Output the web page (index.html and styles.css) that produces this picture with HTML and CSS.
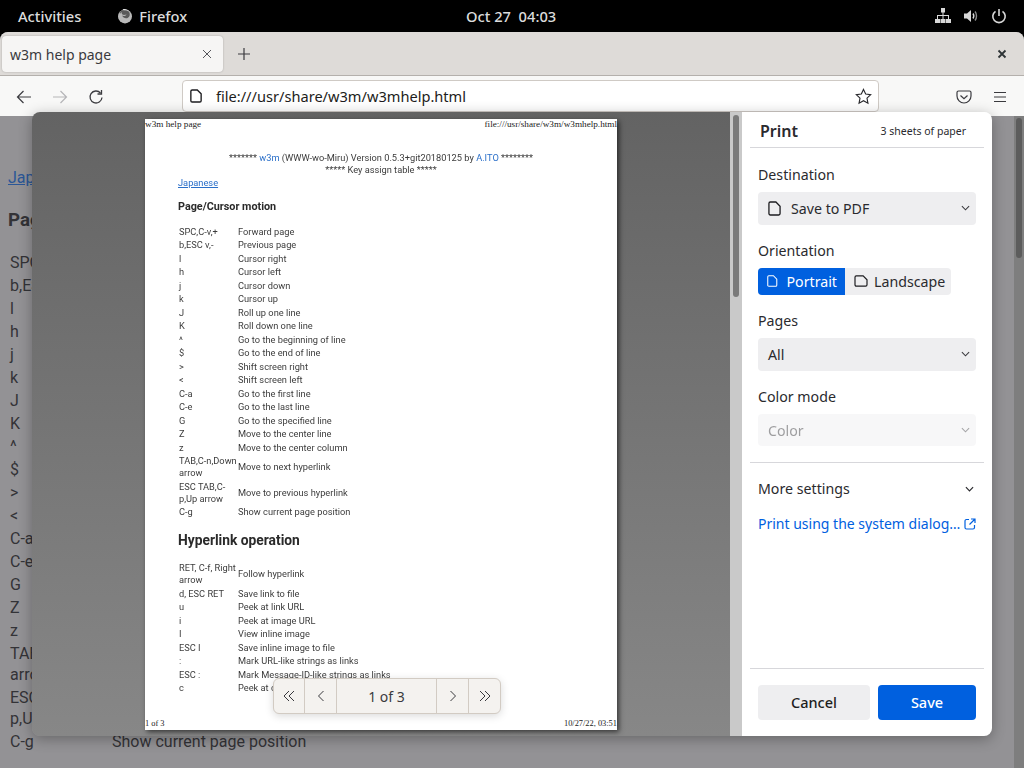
FILE: index.html
```html
<!DOCTYPE html>
<html lang="en">
<head>
    <meta charset="UTF-8">
    <title>w3m help page</title>
    <link rel="stylesheet" href="styles.css">
</head>
<body>

<header class="topbar">
    <div class="topbar-left">
        <span class="activities">Activities</span>
        <span class="app-name">
            <svg class="fx-icon" viewBox="0 0 16 16" width="16" height="16">
                <circle cx="8" cy="8.4" r="7" fill="#b9b9b9"/>
                <path d="M3.6 3.2C2.6 5 3 5.8 3 5.8c1-1.6 2.2-1.6 2.2-1.6-.8 1-.4 2 .4 2.4 1.6.8 2.4 0 4-.2-1 1.4-3 2-4.4 1.2.8 2.4 3.6 3.4 5.8 2.2 1.8-1 2.2-3.4 1.4-5.2C11.6 3 9.600 1.800 7.600 2 6 2.200 4.600 2.400 3.600 3.200z" fill="#5a5a5a"/>
                <path d="M5.500 1.200c2-.6 5.500-.2 7.500 2.800-1.500-1.600-3-1.800-4-1.800-1.200 0-2.500.2-3.500-1z" fill="#e8e8e8"/>
            </svg>
            Firefox
        </span>
    </div>
    <div class="clock">Oct 27&nbsp; 04:03</div>
    <div class="tray">
        <svg viewBox="0 0 16 16" width="16" height="16" fill="#d8d8d8"><path d="M6 0h4v4.500H8.500V7H14v4h-1V8H8.500v3h-1V8H3v3H2V7h5.500V4.500H6z"/><path d="M0 11h5v4H0zM5.500 11h5v4h-5zM11 11h5v4h-5z"/></svg>
        <svg viewBox="0 0 16 16" width="16" height="16" fill="none"><path d="M1 5.500h3L8 2v12l-4-3.500H1z" fill="#d8d8d8"/><path d="M10 5.500c1 1.500 1 3.500 0 5" stroke="#d8d8d8" stroke-width="1.400"/><path d="M12 3.500c2 2.500 2 6.500 0 9" stroke="#8a8a8a" stroke-width="1.400"/></svg>
        <svg viewBox="0 0 16 16" width="16" height="16" fill="none" stroke="#d8d8d8" stroke-width="1.600"><path d="M4.500 3.300a6.200 6.200 0 1 0 7 0"/><path d="M8 1v7"/></svg>
    </div>
</header>

<div class="browser">
    <div class="tabbar">
        <div class="tab">
            <span>w3m help page</span>
            <svg viewBox="0 0 10 10" width="10" height="10" stroke="#55555a" stroke-width="1"><path d="M1 1l8 8M9 1l-8 8"/></svg>
        </div>
        <svg class="new-tab" viewBox="0 0 12 12" width="12" height="12" stroke="#3a3a3e" stroke-width="1.200"><path d="M6 0v12M0 6h12"/></svg>
        <svg class="win-close" viewBox="0 0 10 10" width="10" height="10" stroke="#2e3436" stroke-width="1.800"><path d="M1.500 1.500l7 7M8.500 1.500l-7 7"/></svg>
    </div>
    <div class="toolbar">
        <svg class="nav-btn" viewBox="0 0 16 16" width="16" height="16" fill="none" stroke="#3c3c40" stroke-width="1.200"><path d="M15 8H1.500M7.500 2l-6 6 6 6"/></svg>
        <svg class="nav-btn" viewBox="0 0 16 16" width="16" height="16" fill="none" stroke="#b5b5b8" stroke-width="1.200"><path d="M1 8h13.500M8.500 2l6 6-6 6"/></svg>
        <svg class="nav-btn" viewBox="0 0 16 16" width="16" height="16" fill="none" stroke="#3c3c40" stroke-width="1.300"><path d="M14 8.500A6 6 0 1 1 12.500 4"/><path d="M13.500 1v4h-4" /></svg>
        <div class="urlbar">
            <svg class="page-icon" viewBox="0 0 14 16" width="12" height="14" fill="none" stroke="#1d1d20" stroke-width="1.600"><path d="M2.500 1h6l4.500 4.500v8A1.500 1.500 0 0 1 11.500 15h-9A1.500 1.500 0 0 1 1 13.500v-11A1.500 1.500 0 0 1 2.500 1z"/></svg>
            <span class="url-text">file:///usr/share/w3m/w3mhelp.html</span>
            <svg class="star" viewBox="0 0 18 18" width="17" height="17" fill="none" stroke="#2a2a2e" stroke-width="1.200"><path d="M9 1.500l2.300 4.900 5.300.7-3.900 3.700 1 5.300L9 13.500l-4.700 2.600 1-5.300-3.900-3.700 5.300-.7z"/></svg>
        </div>
        <svg class="pocket" viewBox="0 0 16 16" width="16" height="16" fill="none" stroke="#3a3a3e" stroke-width="1.200"><path d="M2.500 2h11A1.500 1.500 0 0 1 15 3.500V7a7 7 0 0 1-14 0V3.500A1.500 1.500 0 0 1 2.500 2z"/><path d="M4.500 6.500L8 9.800l3.500-3.300"/></svg>
        <svg class="menu" viewBox="0 0 14 12" width="14" height="12" stroke="#3a3a3e" stroke-width="1.200"><path d="M1 1.500h12M1 6h12M1 10.500h12"/></svg>
    </div>

    <main class="under-page">
        <a class="under-link">Japanese</a>
        <h3 class="under-title">Page/Cursor motion</h3>
        <!-- second column is hidden by the dialog, only the last row shows -->
        <table class="under-table">
            <tr><td>SPC,C-v,+</td><td></td></tr>
            <tr><td>b,ESC v,-</td><td></td></tr>
            <tr><td>l</td><td></td></tr>
            <tr><td>h</td><td></td></tr>
            <tr><td>j</td><td></td></tr>
            <tr><td>k</td><td></td></tr>
            <tr><td>J</td><td></td></tr>
            <tr><td>K</td><td></td></tr>
            <tr><td>^</td><td></td></tr>
            <tr><td>$</td><td></td></tr>
            <tr><td>&gt;</td><td></td></tr>
            <tr><td>&lt;</td><td></td></tr>
            <tr><td>C-a</td><td></td></tr>
            <tr><td>C-e</td><td></td></tr>
            <tr><td>G</td><td></td></tr>
            <tr><td>Z</td><td></td></tr>
            <tr><td>z</td><td></td></tr>
            <tr><td>TAB,C-n,Down arrow</td><td></td></tr>
            <tr><td>ESC TAB,C-p,Up arrow</td><td></td></tr>
            <tr><td>C-g</td><td>Show current page position</td></tr>
        </table>
    </main>
    <div class="under-scroll"><div class="under-thumb"></div></div>
</div>

<div class="dialog">
    <section class="preview">
        <div class="sheet">
            <div class="sheet-line"><span>w3m help page</span><span>file:///usr/share/w3m/w3mhelp.html</span></div>
            <div class="sheet-body">
                <p class="sheet-center">******* <a>w3m</a> (WWW-wo-Miru) Version 0.5.3+git20180125 by <a>A.ITO</a> ********<br>***** Key assign table *****</p>
                <a class="sheet-jp">Japanese</a>
                <h3 class="sheet-h3">Page/Cursor motion</h3>
                <table class="sheet-table">
                    <tr><td>SPC,C-v,+</td><td>Forward page</td></tr>
                    <tr><td>b,ESC v,-</td><td>Previous page</td></tr>
                    <tr><td>l</td><td>Cursor right</td></tr>
                    <tr><td>h</td><td>Cursor left</td></tr>
                    <tr><td>j</td><td>Cursor down</td></tr>
                    <tr><td>k</td><td>Cursor up</td></tr>
                    <tr><td>J</td><td>Roll up one line</td></tr>
                    <tr><td>K</td><td>Roll down one line</td></tr>
                    <tr><td>^</td><td>Go to the beginning of line</td></tr>
                    <tr><td>$</td><td>Go to the end of line</td></tr>
                    <tr><td>&gt;</td><td>Shift screen right</td></tr>
                    <tr><td>&lt;</td><td>Shift screen left</td></tr>
                    <tr><td>C-a</td><td>Go to the first line</td></tr>
                    <tr><td>C-e</td><td>Go to the last line</td></tr>
                    <tr><td>G</td><td>Go to the specified line</td></tr>
                    <tr><td>Z</td><td>Move to the center line</td></tr>
                    <tr><td>z</td><td>Move to the center column</td></tr>
                    <tr><td>TAB,C-n,Down arrow</td><td>Move to next hyperlink</td></tr>
                    <tr><td>ESC TAB,C-p,Up arrow</td><td>Move to previous hyperlink</td></tr>
                    <tr><td>C-g</td><td>Show current page position</td></tr>
                </table>
                <h2 class="sheet-h2">Hyperlink operation</h2>
                <table class="sheet-table">
                    <tr><td>RET, C-f, Right arrow</td><td>Follow hyperlink</td></tr>
                    <tr><td>d, ESC RET</td><td>Save link to file</td></tr>
                    <tr><td>u</td><td>Peek at link URL</td></tr>
                    <tr><td>i</td><td>Peek at image URL</td></tr>
                    <tr><td>I</td><td>View inline image</td></tr>
                    <tr><td>ESC I</td><td>Save inline image to file</td></tr>
                    <tr><td>:</td><td>Mark URL-like strings as links</td></tr>
                    <tr><td>ESC :</td><td>Mark Message-ID-like strings as links</td></tr>
                    <tr><td>c</td><td>Peek at current URL</td></tr>
                </table>
            </div>
            <div class="sheet-line sheet-foot"><span>1 of 3</span><span>10/27/22, 03:51</span></div>
        </div>
        <div class="pager">
            <div class="pager-btn"><svg viewBox="0 0 12 12" width="12" height="12" fill="none" stroke="#3a3a3e" stroke-width="1"><path d="M6 1L1 6l5 5M11 1L6 6l5 5"/></svg></div>
            <div class="pager-btn"><svg viewBox="0 0 12 12" width="12" height="12" fill="none" stroke="#3a3a3e" stroke-width="1"><path d="M8.500 1L3.500 6l5 5"/></svg></div>
            <div class="pager-count">1 of 3</div>
            <div class="pager-btn"><svg viewBox="0 0 12 12" width="12" height="12" fill="none" stroke="#3a3a3e" stroke-width="1"><path d="M3.500 1l5 5-5 5"/></svg></div>
            <div class="pager-btn"><svg viewBox="0 0 12 12" width="12" height="12" fill="none" stroke="#3a3a3e" stroke-width="1"><path d="M1 1l5 5-5 5M6 1l5 5-5 5"/></svg></div>
        </div>
    </section>

    <div class="preview-scroll"><div class="preview-thumb"></div></div>

    <aside class="panel">
        <div class="panel-head">
            <span class="panel-title">Print</span>
            <span class="sheet-count">3 sheets of paper</span>
        </div>
        <div class="panel-main">
            <label class="field-label">Destination</label>
            <div class="select select-tall">
                <svg class="select-icon" viewBox="0 0 14 16" width="13" height="15" fill="none" stroke="#1d1d20" stroke-width="1.400"><path d="M2.500 1h6l4.500 4.500v8A1.500 1.500 0 0 1 11.500 15h-9A1.500 1.500 0 0 1 1 13.500v-11A1.500 1.500 0 0 1 2.500 1z"/></svg>
                <span>Save to PDF</span>
                <svg class="chevron" viewBox="0 0 10 6" width="9" height="6" fill="none" stroke="#3a3a3e" stroke-width="1.200"><path d="M1 1l4 4 4-4"/></svg>
            </div>

            <label class="field-label">Orientation</label>
            <div class="toggle">
                <div class="toggle-on">
                    <svg viewBox="0 0 14 16" width="12" height="14" fill="none" stroke="#fff" stroke-width="1.400"><path d="M2.500 1h6l4.500 4.500v8A1.500 1.500 0 0 1 11.500 15h-9A1.500 1.500 0 0 1 1 13.500v-11A1.500 1.500 0 0 1 2.500 1z"/></svg>
                    <span>Portrait</span>
                </div>
                <div class="toggle-off">
                    <svg viewBox="0 0 16 14" width="14" height="12" fill="none" stroke="#1d1d20" stroke-width="1.400"><path d="M2.500 1h8l4.500 4.500v6A1.500 1.500 0 0 1 13.500 13h-11A1.500 1.500 0 0 1 1 11.500v-9A1.500 1.500 0 0 1 2.500 1z"/></svg>
                    <span>Landscape</span>
                </div>
            </div>

            <label class="field-label">Pages</label>
            <div class="select select-tall">
                <span>All</span>
                <svg class="chevron" viewBox="0 0 10 6" width="9" height="6" fill="none" stroke="#3a3a3e" stroke-width="1.200"><path d="M1 1l4 4 4-4"/></svg>
            </div>

            <label class="field-label">Color mode</label>
            <div class="select select-off">
                <span>Color</span>
                <svg class="chevron" viewBox="0 0 10 6" width="9" height="6" fill="none" stroke="#3a3a3e" stroke-width="1.200"><path d="M1 1l4 4 4-4"/></svg>
            </div>
        </div>
        <div class="panel-more">
            <div class="more-row">
                <span>More settings</span>
                <svg viewBox="0 0 10 6" width="9" height="6" fill="none" stroke="#2a2a2e" stroke-width="1.300"><path d="M1 1l4 4 4-4"/></svg>
            </div>
            <div class="system-link">
                <span>Print using the system dialog…</span>
                <svg viewBox="0 0 12 12" width="12" height="12" fill="none" stroke="#0060df" stroke-width="1.200"><path d="M5 1.500H2.500a1.500 1.500 0 0 0-1.500 1.500v6.500A1.500 1.500 0 0 0 2.500 11H9a1.500 1.500 0 0 0 1.500-1.500V7"/><path d="M7 1h4v4M11 1L5.500 6.500"/></svg>
            </div>
        </div>
        <div class="panel-foot">
            <button class="btn btn-cancel">Cancel</button>
            <button class="btn btn-save">Save</button>
        </div>
    </aside>
</div>

</body>
</html>
```

FILE: styles.css
```css
html, body {
    margin: 0;
    padding: 0;
    height: 768px;
    overflow: hidden;
    background: #000;
    font-family: "Noto Sans", sans-serif;
}

/* gnome bar */
.topbar {
    height: 32px;
    background: #000;
    color: #dcdcdc;
    font-size: 14.7px;
    font-weight: 500;
    display: flex;
    align-items: center;
    justify-content: space-between;
    position: relative;
}

.topbar-left {
    display: flex;
    align-items: center;
    padding-left: 18px;
    gap: 36px;
}

.app-name {
    display: flex;
    align-items: center;
    gap: 6px;
}

.clock {
    position: absolute;
    left: 466px;
    top: 6px;
}

.tray {
    display: flex;
    gap: 12px;
    align-items: center;
    padding-right: 17px;
}

/* browser window */
.browser {
    height: 736px;
    border-radius: 8px 8px 0 0;
    overflow: hidden;
    position: relative;
    background: #939295;
}

.tabbar {
    height: 43px;
    background: #dedbd8;
    border-bottom: 1px solid #b4b0ac;
    display: flex;
    align-items: center;
    padding-left: 2px;
    padding-right: 17px;
}

.tab {
    width: 221px;
    height: 36px;
    box-sizing: border-box;
    background: #f6f5f4;
    border-radius: 4px;
    box-shadow: 0 0 2px rgba(0,0,0,.25);
    display: flex;
    align-items: center;
    justify-content: space-between;
    padding: 0 11px 0 8px;
    font-size: 14px;
    color: #3a3a3e;
}

.tab span {
    padding-top: 2px;
}

.new-tab {
    margin-left: 15px;
}

.win-close {
    margin-left: auto;
}

.toolbar {
    height: 40px;
    background: #f8f8f7;
    display: flex;
    align-items: flex-start;
    padding-left: 16px;
    box-sizing: border-box;
}

.nav-btn {
    margin-top: 13px;
    margin-right: 20px;
}

.urlbar {
    width: 697px;
    height: 32px;
    box-sizing: border-box;
    margin-top: 4px;
    margin-left: 58px;
    background: #fff;
    border: 1px solid #cfcac5;
    border-radius: 4px;
    display: flex;
    align-items: center;
    padding: 0 6px 0 7px;
    font-size: 14.6px;
    color: #1d1d20;
}

.page-icon {
    margin-right: 14px;
}

.star {
    margin-left: auto;
}

.pocket {
    margin: 13px 0 0 77px;
}

.menu {
    margin: 15px 0 0 21px;
}

/* the page behind the dialog */
.under-page {
    padding: 51px 0 0 8px;
    color: #333337;
    font-family: Roboto, sans-serif;
    font-size: 16px;
}

.under-link {
    color: #2b5797;
    text-decoration: underline;
    display: block;
    line-height: 22px;
}

.under-title {
    font-size: 18.7px;
    font-weight: 700;
    margin: 20px 0 20px;
    line-height: 22px;
}

.under-table {
    border-collapse: collapse;
    line-height: 21px;
}

.under-table td {
    padding: 1px 0 1px 2px;
    white-space: nowrap;
}

.under-table td:first-child {
    width: 100px;
    white-space: normal;
}

.under-scroll {
    position: absolute;
    right: 0;
    top: 84px;
    bottom: 0;
    width: 10px;
    background: #7e7e7e;
}

.under-thumb {
    width: 6px;
    height: 140px;
    margin: 2px 2px;
    border-radius: 3px;
    background: #5c5c5c;
}

/* print dialog */
.dialog {
    position: absolute;
    left: 32px;
    top: 112px;
    width: 960px;
    height: 624px;
    display: flex;
    border-radius: 8px;
    box-shadow: 0 3px 14px rgba(0,0,0,.3);
}

.preview {
    width: 698px;
    background: linear-gradient(#636363, #878787);
    border-radius: 8px 0 0 8px;
    position: relative;
    overflow: hidden;
}

.sheet {
    width: 472px;
    height: 611px;
    margin: 7px 0 0 113px;
    background: #fff;
    box-shadow: 2px 2px 5px rgba(0,0,0,.6);
    display: flex;
    flex-direction: column;
    color: #3c3c3c;
    font-family: Roboto, sans-serif;
    font-size: 9.25px;
}

.sheet-line {
    display: flex;
    justify-content: space-between;
    font-family: "Liberation Serif", serif;
    font-size: 9.2px;
    line-height: 11px;
    color: #222;
}

.sheet-foot {
    margin-top: auto;
    padding-bottom: 1px;
    font-size: 8.4px;
}

.sheet-body {
    padding: 0 33px;
    filter: blur(.2px);
}

.sheet-center {
    text-align: center;
    margin: 22px 0 0;
    line-height: 12px;
    white-space: nowrap;
}

.sheet-center a {
    color: #2a6fc9;
}

.sheet-jp {
    display: block;
    color: #2a6fc9;
    text-decoration: underline;
    margin-top: 1px;
    line-height: 12px;
}

.sheet-h3 {
    font-size: 10.8px;
    font-weight: 700;
    color: #2a2a2a;
    margin: 11px 0 12px;
    line-height: 13px;
}

.sheet-h2 {
    font-size: 13.8px;
    font-weight: 700;
    color: #2a2a2a;
    margin: 13px 0 13.5px;
    line-height: 16px;
}

.sheet-table {
    border-collapse: collapse;
    line-height: 12px;
}

.sheet-table td {
    padding: .75px 0;
}

.sheet-table td:first-child {
    width: 59px;
    padding-left: 1px;
}

.pager {
    position: absolute;
    left: 241px;
    top: 566px;
    height: 34px;
    display: flex;
    background: #f4f2ef;
    border: 1px solid #d2cbc3;
    border-radius: 6px;
    box-shadow: 0 2px 8px rgba(0,0,0,.15);
    color: #3a3a3e;
    font-size: 14px;
}

.pager-btn {
    width: 31px;
    display: flex;
    align-items: center;
    justify-content: center;
    border-right: 1px solid #d2cbc3;
}

.pager-btn:first-child {
    width: 30px;
}

.pager-btn:last-child {
    border-right: 0;
}

.pager-count {
    width: 99px;
    display: flex;
    align-items: center;
    justify-content: center;
    border-right: 1px solid #d2cbc3;
}

.preview-scroll {
    width: 12px;
    background: #c9c9c9;
}

.preview-thumb {
    width: 6px;
    height: 182px;
    margin: 3px 0 0 3px;
    border-radius: 3px;
    background: #7a7a7a;
}

.panel {
    width: 250px;
    background: #fff;
    border-radius: 0 8px 8px 0;
    display: flex;
    flex-direction: column;
    padding: 0 8px;
    box-sizing: border-box;
    color: #2a2a2e;
    font-size: 14.2px;
}

.panel-head {
    height: 36px;
    border-bottom: 1px solid #d7d7db;
    display: flex;
    align-items: center;
    justify-content: space-between;
    padding: 2px 18px 0 10px;
    box-sizing: border-box;
}

.panel-title {
    font-size: 16px;
    font-weight: 600;
}

.sheet-count {
    font-size: 10.5px;
}

.panel-main {
    padding: 16px 8px 16px;
    border-bottom: 1px solid #d7d7db;
}

.field-label {
    display: block;
    line-height: 22px;
    margin-bottom: 6px;
}

.select {
    height: 32px;
    box-sizing: border-box;
    background: #eeeef0;
    border-radius: 4px;
    display: flex;
    align-items: center;
    gap: 10px;
    padding: 0 6px 0 10px;
    margin-bottom: 15px;
}

.select-tall {
    height: 33px;
    padding-bottom: 1px;
}

.select-off {
    opacity: .45;
    margin-bottom: 0;
}

.chevron {
    margin-left: auto;
}

.toggle {
    display: flex;
    width: 193px;
    height: 27px;
    background: #eeeef0;
    border-radius: 4px;
    overflow: hidden;
    margin-bottom: 15px;
}

.toggle-on, .toggle-off {
    display: flex;
    align-items: center;
    gap: 9px;
    padding: 0 8px 1px 9px;
}

.toggle-off {
    gap: 6px;
}

.toggle-on {
    width: 87px;
    box-sizing: border-box;
    background: #0060df;
    color: #fff;
}

.panel-more {
    padding: 16px 10px 0 8px;
    flex: 1;
}

.more-row {
    display: flex;
    justify-content: space-between;
    align-items: center;
    line-height: 20px;
}

.system-link {
    display: flex;
    justify-content: space-between;
    align-items: center;
    margin-top: 15px;
    margin-right: -2px;
    line-height: 20px;
    font-size: 14px;
    color: #0060df;
    white-space: nowrap;
}

.panel-foot {
    border-top: 1px solid #d7d7db;
    display: flex;
    gap: 8px;
    padding: 16px 8px;
}

.btn {
    height: 35px;
    border: 0;
    border-radius: 4px;
    padding: 0 0 2px;
    font-family: "Noto Sans", sans-serif;
    font-size: 14.5px;
    font-weight: 500;
}

.btn-cancel {
    width: 112px;
    background: #eeeef0;
    color: #1d1d20;
}

.btn-save {
    width: 98px;
    background: #0060df;
    color: #fff;
}
```
